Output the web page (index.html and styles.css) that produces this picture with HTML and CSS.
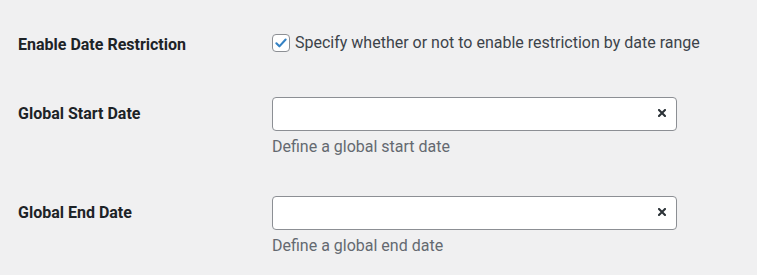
FILE: index.html
```html
<!DOCTYPE html>
<html lang="en">
<head>
<meta charset="utf-8">
<title>Date Restriction Settings</title>
<link rel="stylesheet" href="styles.css">
</head>
<body>
<div class="form-table">
  <div class="row row-check">
    <div class="th">Enable Date Restriction</div>
    <div class="td">
      <label class="check-label">
        <span class="checkbox">
          <svg viewBox="0 0 20 20" width="16" height="16" aria-hidden="true"><path d="M4.2 10.4 L8 14.2 L15.8 5.6" fill="none" stroke="#3582c4" stroke-width="2.6" stroke-linecap="round" stroke-linejoin="round"/></svg>
        </span>
        Specify whether or not to enable restriction by date range
      </label>
    </div>
  </div>
  <div class="row row-start">
    <div class="th">Global Start Date</div>
    <div class="td">
      <div class="date-input"><svg class="clear" viewBox="0 0 8 8" width="8" height="8" aria-hidden="true"><path d="M1 1 L7 7 M7 1 L1 7" stroke="#2c3338" stroke-width="2.1" stroke-linecap="square"/></svg></div>
      <p class="description">Define a global start date</p>
    </div>
  </div>
  <div class="row row-end">
    <div class="th">Global End Date</div>
    <div class="td">
      <div class="date-input"><svg class="clear" viewBox="0 0 8 8" width="8" height="8" aria-hidden="true"><path d="M1 1 L7 7 M7 1 L1 7" stroke="#2c3338" stroke-width="2.1" stroke-linecap="square"/></svg></div>
      <p class="description">Define a global end date</p>
    </div>
  </div>
</div>
</body>
</html>
```
FILE: styles.css
```css
html, body {
  margin: 0;
  padding: 0;
  background: #f0f0f1;
}
body {
  font-family: Roboto, "Liberation Sans", sans-serif;
  font-size: 16px;
  color: #3c434a;
}
.form-table {
  padding-left: 18px;
}
.row {
  display: grid;
  grid-template-columns: 254px 405px;
  align-items: start;
}
.th {
  font-weight: 700;
  color: #1d2327;
  line-height: 20px;
}
.row-check {
  padding-top: 34px;
  padding-bottom: 42px;
}
.row-check .th {
  padding-top: 1px;
}
.row-start {
  padding-bottom: 39px;
}
.row-start .th,
.row-end .th {
  padding-top: 7px;
}
.check-label {
  display: flex;
  align-items: center;
  gap: 5px;
  line-height: 18px;
  white-space: nowrap;
}
.checkbox {
  width: 16px;
  height: 16px;
  border: 1px solid #8c8f94;
  border-radius: 4px;
  background: #fff;
  display: flex;
  align-items: center;
  justify-content: center;
  flex-shrink: 0;
}
.date-input {
  height: 32px;
  border: 1px solid #8c8f94;
  border-radius: 4px;
  background: #fff;
  display: flex;
  align-items: center;
  justify-content: flex-end;
  padding-right: 10px;
}
.clear {
  display: block;
  margin-top: -2px;
}
.description {
  margin: 6px 0 0;
  line-height: 20px;
  color: #646970;
}
```
